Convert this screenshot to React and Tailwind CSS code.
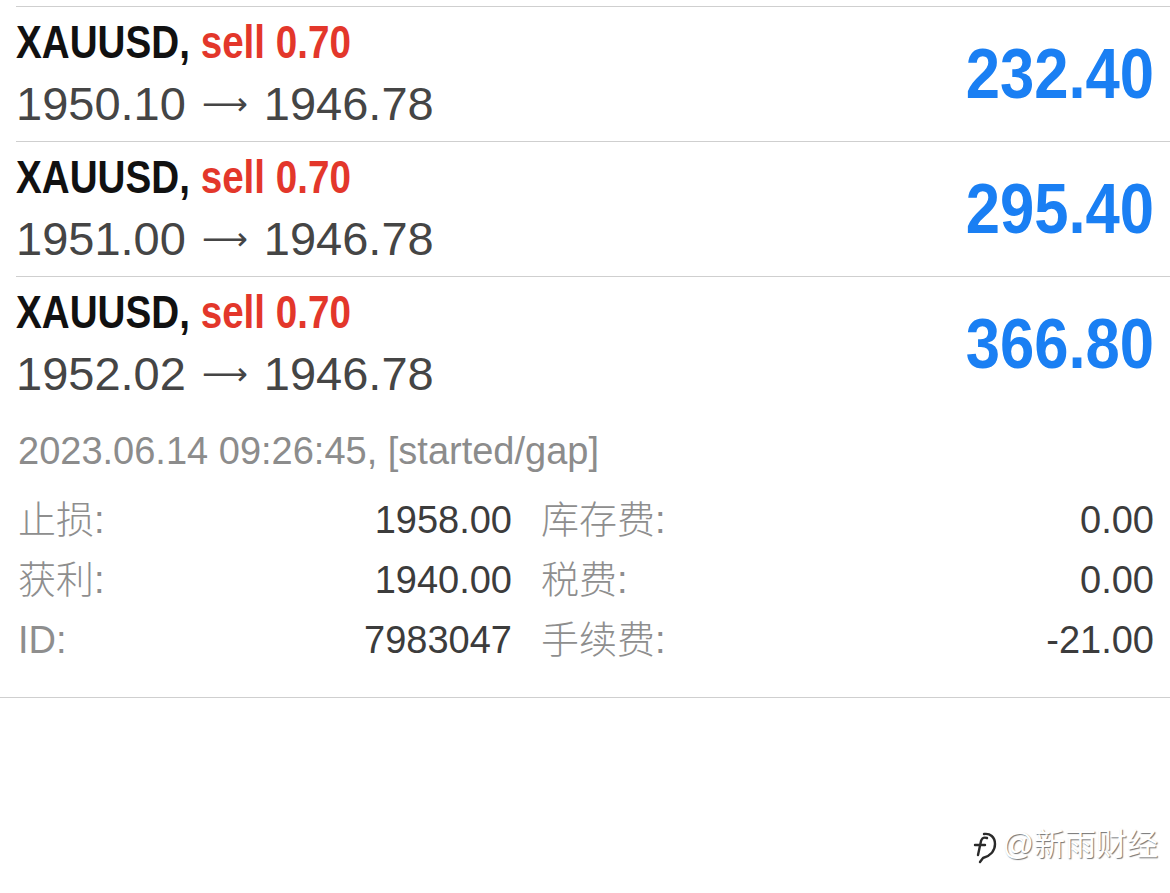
import React from "react";

const trades = [
  { open: "1950.10", close: "1946.78", profit: "232.40" },
  { open: "1951.00", close: "1946.78", profit: "295.40" },
  { open: "1952.02", close: "1946.78", profit: "366.80" },
];

const details = [
  ["止损:", "1958.00", "库存费:", "0.00"],
  ["获利:", "1940.00", "税费:", "0.00"],
  ["ID:", "7983047", "手续费:", "-21.00"],
];

const TradeHead = ({ t }) => (
  <div className="flex items-center justify-between pr-4 py-[7px]">
    <div className="flex flex-col">
      <div className="h-[56px] leading-[56px] text-[46px] font-bold whitespace-nowrap origin-left scale-x-[0.84] text-[#111]">
        XAUUSD, <span className="text-[#e3372b]">sell 0.70</span>
      </div>
      <div className="h-[64px] pt-[3px] leading-[64px] text-[47px] text-[#454545] whitespace-nowrap flex items-center">
        <span>{t.open}</span>
        <span className="mx-[16px] font-['DejaVu_Sans',sans-serif] text-[32px]">⟶</span>
        <span>{t.close}</span>
      </div>
    </div>
    <div className="text-[70px] font-bold leading-none text-[#1a7ff3] origin-right scale-x-[0.88]">
      {t.profit}
    </div>
  </div>
);

const App = () => {
  return (
    <div className="relative w-[1170px] h-[893px] bg-white overflow-hidden font-['Liberation_Sans','Noto_Sans_CJK_SC',sans-serif]">
      <div className="pt-[6px]">
        {trades.slice(0, 2).map((t, i) => (
          <div key={i} className="ml-4 border-t border-[#cfcfcf]">
            <TradeHead t={t} />
          </div>
        ))}
        {/* expanded item */}
        <div className="border-b border-[#cfcfcf]">
          <div className="ml-4 border-t border-[#cfcfcf]">
            <TradeHead t={trades[2]} />
            <div className="pr-4 pb-[27px]">
              <div className="mt-[16px] h-[48px] leading-[48px] text-[38px] text-[#8c8c8c] pl-[2px]">
                2023.06.14 09:26:45, [started/gap]
              </div>
              <div className="mt-[15px] flex flex-col pl-[2px]">
                {details.map((d, i) => (
                  <div key={i} className="h-[60px] leading-[60px] text-[38px] flex">
                    <div className="w-[494px] flex justify-between">
                      <span className="text-[#8e8e8e] font-light">{d[0]}</span>
                      <span className="text-[#3c3c3c]">{d[1]}</span>
                    </div>
                    <div className="ml-[29px] flex-1 flex justify-between">
                      <span className="text-[#8e8e8e] font-light">{d[2]}</span>
                      <span className="text-[#3c3c3c]">{d[3]}</span>
                    </div>
                  </div>
                ))}
              </div>
            </div>
          </div>
        </div>
      </div>

      {/* watermark */}
      <div className="absolute right-[12px] top-[822px] flex items-center gap-1 text-white text-[31px] [text-shadow:1px_1px_1px_rgba(0,0,0,0.55)]">
        <svg width="30" height="38" viewBox="0 0 30 38" className="mt-1">
          <path d="M15 6c6-1 11 3 11 10 0 7-5 12-12 14l-3 4" fill="none" stroke="#2a2a2a" strokeWidth="2.4" strokeLinecap="round" />
          <path d="M9 27l3-14c1-3 3-4 6-3M6 17h10" fill="none" stroke="#2a2a2a" strokeWidth="2.4" strokeLinecap="round" />
        </svg>
        <span>@新雨财经</span>
      </div>
    </div>
  );
};

export default App;
